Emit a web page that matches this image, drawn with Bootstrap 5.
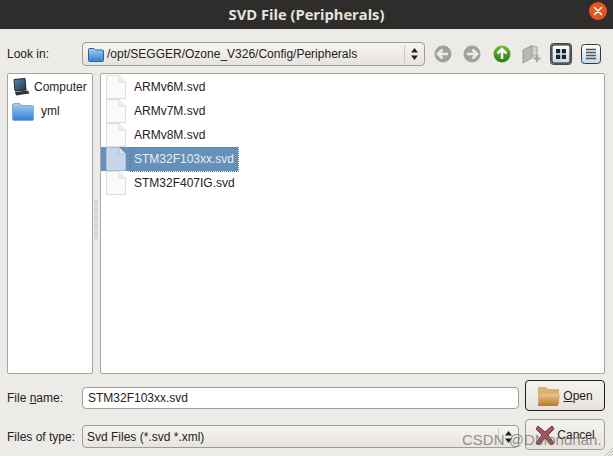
<!DOCTYPE html>
<html lang="en"><head><meta charset="utf-8"><title>SVD File</title>
<link href="https://cdn.jsdelivr.net/npm/bootstrap@5.3.0/dist/css/bootstrap.min.css" rel="stylesheet">
<style>
html,body{margin:0;height:456px;overflow:hidden;background:#edebe7;font:12px/16px "Liberation Sans",sans-serif;color:#222}
.dlg{width:613px;height:456px;position:relative}
.ttl{height:29px;background:#2f2d2b;color:#e6e3df;font:700 14.700px/29px "Open Sans",sans-serif;text-align:center;position:relative}
.cls{position:absolute;left:589px;top:2px;width:18px;height:18px;border-radius:50%;background:#e9541f;display:flex;align-items:center;justify-content:center}
.lkrow{height:24px;margin-top:13px;padding-left:7px}
.lbl{width:75px;flex:none;font-size:12px}
.combo{height:24px;border:1px solid #a09b94;border-radius:4px;background:linear-gradient(#f6f4f1,#e7e4df);display:flex;align-items:center;position:relative}
.path{width:343px;padding-left:5px;gap:3px}
.spin{position:absolute;right:0;top:2px;bottom:2px;width:20px;border-left:1px solid #cdc9c3;display:flex;align-items:center;justify-content:center}
.tools{margin-left:3px}
.tb{width:29.600px;height:24px;display:flex;align-items:center;justify-content:center}
.panes{margin:7px 8px 0 7px;height:301px;gap:7px}
.side,.files{background:#fff;border:1px solid #aaa69f;border-radius:2px;padding-top:1px}
.side{width:86px;flex:none}
.files{flex:1;padding-top:1px}
.itm{height:24px;display:flex;align-items:center;white-space:nowrap}
.side .itm{padding-left:4px;gap:4px}
.files .itm{padding-left:5px;gap:8px;width:137px}
.files .sel{background:#6590b7;color:#e8eef4}
.files .sel span{outline:1px dotted #557ba0;height:23px;line-height:23px;flex:1;margin-left:-3px;padding-left:3px}
.frow{padding-left:7px}
.edit{width:437px;height:22px;border:1px solid #a09b94;border-radius:4px;background:#fff;padding-left:5px;line-height:20px;font-size:12px}
.tcombo{width:437px;padding-left:4px;height:23px}
.lowr{margin-top:4px}
.pbtn{width:80px;height:31px;margin-left:6px;border:1px solid #a09b94;border-radius:4px;background:linear-gradient(#f5f3f0,#e6e3de);display:flex;align-items:center;justify-content:center;gap:2px;font-size:12px;color:#222;padding:0}
.pdef{border:1px solid #1f1e1c}
.r1{margin-top:6px;height:31px}.r2{margin-top:8px;height:31px}
.mk{position:absolute;left:462px;top:431px;color:#6e6c69;opacity:.7;font:15px/18px "Liberation Sans",sans-serif;white-space:nowrap}
.grip{position:absolute;left:94px;top:200px;width:4px;height:40px;background:repeating-linear-gradient(#c9c6c1 0 1px,transparent 1px 2px)}
.rsz{position:absolute;right:0;bottom:0}
u{text-underline-offset:1px}
</style></head><body>
<svg width="0" height="0" class="position-absolute"><defs>
<linearGradient id="fb" x1="0" y1="0" x2="0" y2="1"><stop offset="0" stop-color="#a8cdf0"/><stop offset="1" stop-color="#2f7fd0"/></linearGradient>
<linearGradient id="fo" x1="0" y1="0" x2="0" y2="1"><stop offset="0" stop-color="#e8c68a"/><stop offset="1" stop-color="#b57a2c"/></linearGradient>
<linearGradient id="gb" x1="0" y1="0" x2="0" y2="1"><stop offset="0" stop-color="#fff"/><stop offset="1" stop-color="#bcd8f2"/></linearGradient>
<linearGradient id="gg" x1="0" y1="0" x2="0" y2="1"><stop offset="0" stop-color="#6fb83a"/><stop offset="1" stop-color="#2c7a14"/></linearGradient>
<linearGradient id="gs" x1="0" y1="0" x2="1" y2="1"><stop offset="0" stop-color="#5b8db0"/><stop offset="1" stop-color="#16384f"/></linearGradient>
<symbol id="doc" viewBox="0 0 20 24"><path d="M.5.5H13L19.500 7V23.500H.5Z" fill="#fafafa" stroke="#dcdcdc"/><path d="M13 .5V7H19.500" fill="#f0f0f0" stroke="#dcdcdc"/></symbol>
<symbol id="docs" viewBox="0 0 20 24"><path d="M.5.5H13L19.500 7V23.500H.5Z" fill="#c6d6e6" stroke="#a9bfd6"/><path d="M13 .5V7H19.500" fill="#dce6f0" stroke="#a9bfd6"/></symbol>
</defs></svg>
<div class="dlg">
<div class="ttl">SVD File (Peripherals)
<span class="cls"><svg width="10" height="10" viewBox="0 0 10 10"><path d="M1.500 1.500 8.500 8.500M8.500 1.500 1.500 8.500" stroke="#fff" stroke-width="1.600" stroke-linecap="round"/></svg></span></div>
<div class="lkrow d-flex align-items-center">
<span class="lbl">Look in:</span>
<div class="combo path"><svg width="16" height="15" viewBox="0 0 16 15"><path d="M.5 2.500A1 1 0 0 1 1.500 1.500H6L7.500 3H14.500A1 1 0 0 1 15.500 4V13.500A1 1 0 0 1 14.500 14.500H1.500A1 1 0 0 1 .5 13.500Z" fill="url(#fb)" stroke="#2a62a6"/></svg><span>/opt/SEGGER/Ozone_V326/Config/Peripherals</span>
<span class="spin"><svg width="9" height="14" viewBox="0 0 9 14"><path d="M4.500 1 8 5.500H1ZM4.500 13 1 8.500H8Z" fill="#222"/></svg></span></div>
<div class="tools d-flex align-items-center">
<span class="tb"><svg width="18" height="18" viewBox="0 0 18 18"><circle cx="9" cy="9" r="8.500" fill="#a3a19d"/><path d="M14 9H5M8.500 4.500 4 9l4.500 4.500" fill="none" stroke="#eeece9" stroke-width="2.600"/></svg></span>
<span class="tb"><svg width="18" height="18" viewBox="0 0 18 18"><circle cx="9" cy="9" r="8.500" fill="#a3a19d"/><path d="M4 9h9M9.500 4.500 14 9l-4.500 4.500" fill="none" stroke="#eeece9" stroke-width="2.600"/></svg></span>
<span class="tb"><svg width="18" height="18" viewBox="0 0 18 18"><circle cx="9" cy="9" r="8.500" fill="url(#gg)"/><path d="M9 14V5M4.500 8.500 9 4l4.500 4.500" fill="none" stroke="#f2f6ee" stroke-width="2.600"/></svg></span>
<span class="tb"><svg width="20" height="20" viewBox="0 0 20 20"><path d="M1 6 10 1.500V14L1 19Z" fill="#b9b7b3" stroke="#9c9a96"/><path d="M10 2 15 3V12H10Z" fill="#d2d0cc" stroke="#a5a39f"/><path d="M15 11v7M11.500 14.500h7" stroke="#a5a39f" stroke-width="2.200"/></svg></span>
<span class="tb"><svg width="22" height="22" viewBox="0 0 22 22"><rect x=".5" y=".5" width="21" height="21" rx="3" fill="#8a8781" stroke="#4a4845"/><rect x="2" y="2" width="18" height="18" rx="2" fill="url(#gb)" stroke="#222"/><path d="M6 6h4.200v4.200H6zM11.800 6H16v4.200h-4.200zM6 11.800h4.200V16H6zM11.800 11.800H16V16h-4.200z" fill="#222"/></svg></span>
<span class="tb"><svg width="20" height="20" viewBox="0 0 20 20"><rect x=".5" y=".5" width="19" height="19" rx="3" fill="url(#gb)" stroke="#3a3835"/><path d="M5 5.500h10M5 8.500h10M5 11.500h10M5 14.500h10" stroke="#555" stroke-width="1.600"/></svg></span>
</div></div>
<div class="panes d-flex">
<div class="side">
<div class="itm"><svg width="18" height="19" viewBox="0 0 18 19"><path d="M2 1.500 13 .5 14 12 3 13Z" fill="url(#gs)" stroke="#222"/><path d="M3 14 16 12.500 17.500 15.500 4 17.500Z" fill="#333"/></svg><span>Computer</span></div>
<div class="itm"><svg width="22" height="19" viewBox="0 0 22 19"><path d="M.5 3A1.500 1.500 0 0 1 2 1.500H8L10 3.500H20A1.500 1.500 0 0 1 21.500 5V17A1.500 1.500 0 0 1 20 18.500H2A1.500 1.500 0 0 1 .5 17Z" fill="url(#fb)" stroke="#7daee0"/></svg><span class="ms-1">yml</span></div>
</div>
<div class="files">
<div class="itm"><svg width="20" height="24"><use href="#doc"/></svg><span>ARMv6M.svd</span></div>
<div class="itm"><svg width="20" height="24"><use href="#doc"/></svg><span>ARMv7M.svd</span></div>
<div class="itm"><svg width="20" height="24"><use href="#doc"/></svg><span>ARMv8M.svd</span></div>
<div class="itm sel"><svg width="20" height="24"><use href="#docs"/></svg><span>STM32F103xx.svd</span></div>
<div class="itm"><svg width="20" height="24"><use href="#doc"/></svg><span>STM32F407IG.svd</span></div>
</div></div>
<div class="frow r1 d-flex align-items-center">
<span class="lbl lowr">File <u>n</u>ame:</span><div class="edit lowr">STM32F103xx.svd</div>
<button class="pbtn pdef" type="button"><svg width="24" height="24" viewBox="0 0 24 24"><path d="M1 3H9L11 5H22V20H1Z" fill="#d9b271"/><path d="M3 10H23L21 22H1Z" fill="url(#fo)"/></svg><span><u>O</u>pen</span></button>
</div>
<div class="frow r2 d-flex align-items-center">
<span class="lbl lowr">Files of type:</span><div class="combo tcombo lowr">Svd Files (*.svd *.xml)<span class="spin"><svg width="9" height="14" viewBox="0 0 9 14"><path d="M4.500 1 8 5.500H1ZM4.500 13 1 8.500H8Z" fill="#222"/></svg></span></div>
<button class="pbtn" type="button"><svg width="20" height="22" viewBox="0 0 20 22"><path d="M3 2 10 8 17 2 19 5 13 11 19 19 16 21 10 14 4 21 1 19 7 11 1 5Z" fill="#a8525c" stroke="#6f3a40"/></svg><span>Cancel</span></button>
</div>
<span class="grip"></span>
<svg class="rsz" width="9" height="9" viewBox="0 0 9 9"><path d="M9 1 1 9M9 4 4 9M9 7 7 9" stroke="#c3bfb9"/></svg>
<span class="mk">CSDN @DMondrian.</span>
</div>
</body></html>
